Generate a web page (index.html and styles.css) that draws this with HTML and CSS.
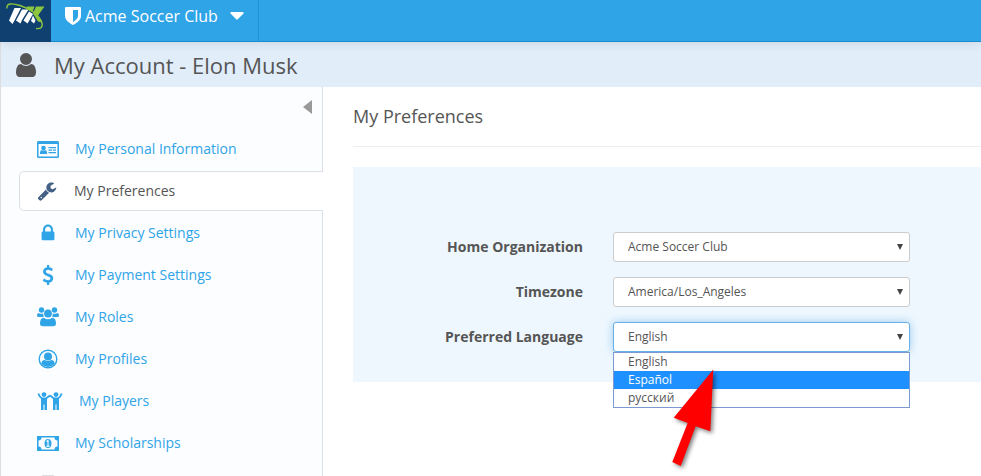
FILE: index.html
```html
<!DOCTYPE html>
<html lang="en">
<head>
<meta charset="utf-8">
<title>My Account</title>
<link rel="stylesheet" href="styles.css">
</head>
<body>
<header class="topbar">
  <a class="logo" href="#" aria-label="Home">
    <svg width="51" height="41" viewBox="0 0 51 41">
      <path fill="#fff" d="M14.500 8h6.500L14.500 20.500 12.500 24 9 20.500zM22 9.500h6.500L22 20 20.500 23.500l-4.500-3zM29 11.500l4 2.500-4 7-1.500 2.500-4-3zM33 15.500l2.500 5-1.500 3-3-2.500z"/>
      <path fill="#8cc63f" d="M27 6.500h7.500l-2 5.500-6-3zM36 6.500h8.500L38 15.500l4.500 7-4.500-1-5-8z"/>
      <path fill="none" stroke="#8cc63f" stroke-width="1.400" d="M7 8.500C6 3 12 3 20 5.500c10 3 20 10 22 17.500 1 4-1 6-6 5.500"/>
    </svg>
  </a>
  <button class="club" type="button">
    <svg width="16" height="18" viewBox="0 0 16 18"><path fill="#fff" fill-rule="evenodd" d="M1 0h14q1 0 1 1v8c0 4-4 7-8 9-4-2-8-5-8-9V1q0-1 1-1zM8 3v12c3-2 5-4 5-6V3z"/></svg>
    <span>Acme Soccer Club</span>
    <svg class="caret" width="14" height="8" viewBox="0 0 14 8"><path fill="#fff" d="M1 0h12q1 .5.5 1.500L8 7q-1 1-2 0L.5 1.500Q0 .5 1 0z"/></svg>
  </button>
</header>
<div class="page">
  <div class="account">
    <svg width="28" height="28" viewBox="0 0 1792 1792"><path fill="#555" d="M1536 1399q0 109-62.500 187t-150.500 78h-854q-88 0-150.500-78t-62.500-187q0-85 8.500-160.500t31.500-152 58.500-131 94-89 134.500-34.500q131 128 313 128t313-128q76 0 134.500 34.500t94 89 58.500 131 31.500 152 8.500 160.500zm-256-887q0 159-112.500 271.500t-271.500 112.500-271.500-112.500-112.500-271.500 112.500-271.500 271.500-112.500 271.500 112.500 112.500 271.500z"/></svg>
    <h1>My Account - Elon Musk</h1>
  </div>
  <div class="body">
    <nav class="side">
      <button class="collapse" type="button" aria-label="Collapse menu"><svg width="9" height="14" viewBox="0 0 9 14"><path fill="#999" d="M9 0v14L0 7z"/></svg></button>
      <a class="item" href="#">
        <svg width="22" height="17" viewBox="0 0 22 17"><path fill="currentColor" fill-rule="evenodd" d="M1.500 0h19Q22 0 22 1.500v14q0 1.500-1.500 1.500h-19Q0 17 0 15.500v-14Q0 0 1.500 0zM1.500 3v12.500h19V3z"/><circle cx="6.500" cy="7" r="2.300" fill="currentColor"/><path fill="currentColor" d="M3 13v-1.500q0-2.500 2-2.500 1.500 1 3 0 2 0 2 2.500V13zM11.500 6H19v1.200h-7.500zM11.500 8.500H15v1.200h-3.500zM16 8.500h3v1.200h-3zM11.500 11H19v1.200h-7.500z"/></svg>
        <span>My Personal Information</span></a>
      <a class="item active" href="#" aria-current="page">
        <svg width="20" height="20" viewBox="0 0 1792 1792"><path fill="currentColor" d="M448 1472q0-26-19-45t-45-19-45 19-19 45 19 45 45 19 45-19 19-45zm644-420l-682 682q-37 37-90 37-52 0-91-37l-106-108q-38-36-38-90 0-53 38-91l681-681q39 98 114.500 173.500t173.500 114.500zm634-435q0 39-23 106-47 134-164.500 217.500t-258.500 83.500q-185 0-316.500-131.500t-131.500-316.500 131.500-316.500 316.500-131.500q58 0 121.500 16.500t107.500 46.500q16 11 16 28t-16 28l-293 169v224l193 107q5-3 79-48.500t135.500-81 70.500-35.500q15 0 23.500 10t8.500 25z"/></svg>
        <span>My Preferences</span></a>
      <a class="item" href="#">
        <svg width="20" height="20" viewBox="0 0 1792 1792"><path fill="currentColor" d="M640 768h512v-192q0-106-75-181t-181-75-181 75-75 181v192zm832 96v576q0 40-28 68t-68 28h-960q-40 0-68-28t-28-68v-576q0-40 28-68t68-28h32v-192q0-184 132-316t316-132 316 132 132 316v192h32q40 0 68 28t28 68z"/></svg>
        <span>My Privacy Settings</span></a>
      <a class="item" href="#">
        <svg width="20" height="20" viewBox="0 0 1792 1792"><path fill="currentColor" d="M1362 1185q0 153-99.500 263.500t-258.500 136.500v175q0 14-9 23t-23 9h-135q-13 0-22.500-9.500t-9.500-22.500v-175q-66-9-127.500-31t-101.500-44.500-74-48-46.500-37.500-17.500-18q-17-21-2-41l103-135q7-10 23-12 15-2 24 9l2 2q113 99 243 125 37 8 74 8 81 0 142.500-43t61.500-122q0-28-15-53t-33.500-42-58.500-37.500-66-32-80-32.500q-39-16-61.500-25t-61.500-26.500-62.500-31-56.500-35.500-53.500-42.500-43.500-49-35.500-58-21-66.500-8.500-78q0-138 98-242t255-134v-180q0-13 9.500-22.500t22.500-9.500h135q14 0 23 9t9 23v176q57 6 110.500 23t87 33.500 63.500 37.500 39 29 15 14q17 18 5 38l-81 146q-8 15-23 16-14 3-27-7-3-3-14.500-12t-39-26.500-58.500-32-74.500-26-85.500-11.500q-95 0-155 43t-60 111q0 26 8.500 48t29.500 41.500 39.500 33 56 31 60.500 27 70 27.500q53 20 81 31.500t76 35 75.500 42.500 62 50 53 63.500 31.500 76.500 13 94z"/></svg>
        <span>My Payment Settings</span></a>
      <a class="item" href="#">
        <svg width="22" height="20" viewBox="0 0 22 20"><g fill="currentColor"><circle cx="4.500" cy="3" r="2.700"/><circle cx="17.500" cy="3" r="2.700"/><path d="M1.500 6q2.500 1.300 4.800.6Q6 9 7 10H2Q0 10 0 8.800 0 6.300 1.500 6zM20.500 6q-2.500 1.300-4.800.6Q16 9 15 10h5q2 0 2-1.200 0-2.500-1.500-2.800z"/><circle cx="11" cy="6.500" r="3.900"/><path d="M6.800 10.700q4.200 3 8.400 0 3.800.3 3.800 5.800 0 2.800-3 2.800H6q-3 0-3-2.800 0-5.500 3.800-5.800z"/></g></svg>
        <span>My Roles</span></a>
      <a class="item" href="#">
        <svg width="20" height="20" viewBox="0 0 20 20"><circle cx="10" cy="10" r="8.800" fill="none" stroke="currentColor" stroke-width="1.400"/><circle cx="10" cy="7.500" r="4" fill="currentColor"/><path fill="currentColor" d="M6.500 11q3.500 2 7 0 2.800.2 3.200 4-6.700 6-13.400 0 .4-3.800 3.200-4z"/></svg>
        <span>My Profiles</span></a>
      <a class="item players" href="#">
        <svg width="26" height="20" viewBox="0 0 26 20"><g fill="currentColor"><circle cx="7" cy="3.600" r="2.400"/><circle cx="19" cy="3.600" r="2.400"/><path d="M4 7v12h2.500v-5.500h1V19H10V7zM16 7v12h2.500v-5.500h1V19H22V7z"/></g><path fill="none" stroke="currentColor" stroke-width="1.800" stroke-linejoin="round" d="M1.300 2.500Q2.500 6 5 7.500h4L12.300 5h1.400L17 7.500h4q2.500-1.500 3.700-5"/></svg>
        <span>My Players</span></a>
      <a class="item" href="#">
        <svg width="22" height="15" viewBox="0 0 22 15"><path fill="currentColor" fill-rule="evenodd" d="M0 0h22v15H0zM4.500 1.500q0 3-3 3v6q3 0 3 3h13q0-3 3-3v-6q-3 0-3-3z"/><ellipse cx="11" cy="7.500" rx="3.500" ry="4.500" fill="currentColor"/><path fill="none" stroke="#fff" stroke-width="1.100" d="M9.500 5.500 11 4.500V10M9.200 10.200h3.600"/></svg>
        <span>My Scholarships</span></a>
      <div class="item more">
        <svg width="20" height="20" viewBox="0 0 20 20"><path fill="currentColor" d="M5 0h10q1 0 1 1v18q0 1-1 1H5q-1 0-1-1V1q0-1 1-1z"/></svg>
      </div>
    </nav>
    <main class="main">
      <h2>My Preferences</h2>
      <form class="panel">
        <label for="org">Home Organization</label>
        <div class="control"><select id="org"><option>Acme Soccer Club</option></select><svg class="tri" width="6" height="6" viewBox="0 0 6 6"><path d="M0 0h6L3 6z"/></svg></div>
        <label for="tz">Timezone</label>
        <div class="control"><select id="tz"><option>America/Los_Angeles</option></select><svg class="tri" width="6" height="6" viewBox="0 0 6 6"><path d="M0 0h6L3 6z"/></svg></div>
        <label for="lang">Preferred Language</label>
        <div class="control">
          <select id="lang" class="focused"><option>English</option><option>Español</option><option>русский</option></select><svg class="tri" width="6" height="6" viewBox="0 0 6 6"><path d="M0 0h6L3 6z"/></svg>
          <ul class="menu" role="listbox" aria-label="Preferred Language"><li role="option">English</li><li role="option" class="hover" aria-selected="true">Español</li><li role="option">русский</li></ul>
          <svg class="pointer" width="50" height="106" viewBox="0 0 50 106"><path fill="red" d="M43.300 2.500 3.700 50.700l14 5.300L2.300 95l8.400 4 15-39.700 14.600 5z"/></svg>
        </div>
      </form>
    </main>
  </div>
</div>
</body>
</html>
```
FILE: styles.css
```css
* { box-sizing: border-box; }
body {
  margin: 0;
  height: 100vh;
  overflow: hidden;
  display: flex;
  flex-direction: column;
  font: 14px/20px "Open Sans", "Noto Sans", sans-serif;
  color: #555;
  background: #fff;
}
button { border: 0; padding: 0; background: none; font: inherit; color: inherit; }
svg { display: block; flex: none; }
.topbar {
  display: flex;
  height: 42px;
  flex: none;
  background: #2fa4e7;
  border-bottom: 1px solid #1b8bcd;
  box-shadow: 0 1px 10px rgba(0, 0, 0, .1);
  position: relative;
}
.logo { background: #10406f; margin-bottom: -1px; }
.club {
  display: flex;
  align-items: center;
  gap: 4px;
  padding: 0 14px 9px;
  border-right: 1px solid #1f93d6;
  color: #fff;
  font-size: 16px;
}
.caret { margin-left: 8px; }
.page {
  flex: 1;
  min-height: 0;
  display: flex;
  flex-direction: column;
  border-left: 1px solid #ddd;
}
.account {
  display: flex;
  align-items: center;
  gap: 14px;
  height: 45px;
  flex: none;
  padding-left: 11px;
  background: #e1edf9;
}
h1, h2 { margin: 0; font-weight: 400; }
h1 { font-size: 22px; line-height: 30px; }
.body { flex: 1; min-height: 0; display: flex; }
.side {
  width: 322px;
  flex: none;
  display: flex;
  flex-direction: column;
  gap: 2px;
  padding-left: 18px;
  background: #fcfdff;
  border-right: 1px solid #dbe0e8;
}
.collapse { flex: none; align-self: flex-end; height: 40px; padding-right: 10px; }
.item {
  display: flex;
  align-items: center;
  gap: 16px;
  height: 40px;
  flex: none;
  padding-left: 18px;
  color: #2fa4e7;
  text-decoration: none;
}
.item svg { width: 22px; }
.item.players svg { width: 26px; }
.item.more { color: #ddd; }
.item.active {
  margin-right: -1px;
  padding-left: 16px;
  color: #446084;
  background: #fff;
  border: 1px solid #dbe0e8;
  border-right: 0;
  border-radius: 5px 0 0 5px;
}
.item.active span { color: #555; }
.main { flex: 1; min-width: 0; padding-left: 30px; }
h2 {
  font-size: 18px;
  line-height: 59px;
  border-bottom: 1px solid #eee;
  margin-bottom: 20px;
}
.panel {
  display: grid;
  grid-template-columns: 230px minmax(0, 297px);
  gap: 15px 30px;
  padding: 65px 0 30px;
  background: #eef7fe;
}
.panel label { text-align: right; font-weight: 700; line-height: 30px; }
.control { position: relative; }
select {
  display: block;
  appearance: none;
  width: 100%;
  height: 30px;
  padding: 0 14px;
  border: 1px solid #ccc;
  border-radius: 3px;
  background: #fff;
  font: 12px/18px "Open Sans", "Noto Sans", sans-serif;
  color: #555;
}
select.focused {
  border-color: #66afe9;
  box-shadow: 0 0 8px rgba(102, 175, 233, .6);
}
.tri { position: absolute; right: 7px; top: 12px; fill: #444; }
.menu {
  position: absolute;
  top: 30px;
  left: 0;
  right: 0;
  margin: 0;
  padding: 0;
  list-style: none;
  border: 1px solid #7a9ad0;
  background: #fff;
  font-size: 12px;
  line-height: 18px;
}
.menu li { padding-left: 14px; }
.menu .hover { background: #1e90ff; color: #fff; }
.pointer {
  position: absolute;
  left: 57px;
  top: 45px;
  filter: drop-shadow(2px 2px 2px rgba(0, 0, 0, .5));
}
```
